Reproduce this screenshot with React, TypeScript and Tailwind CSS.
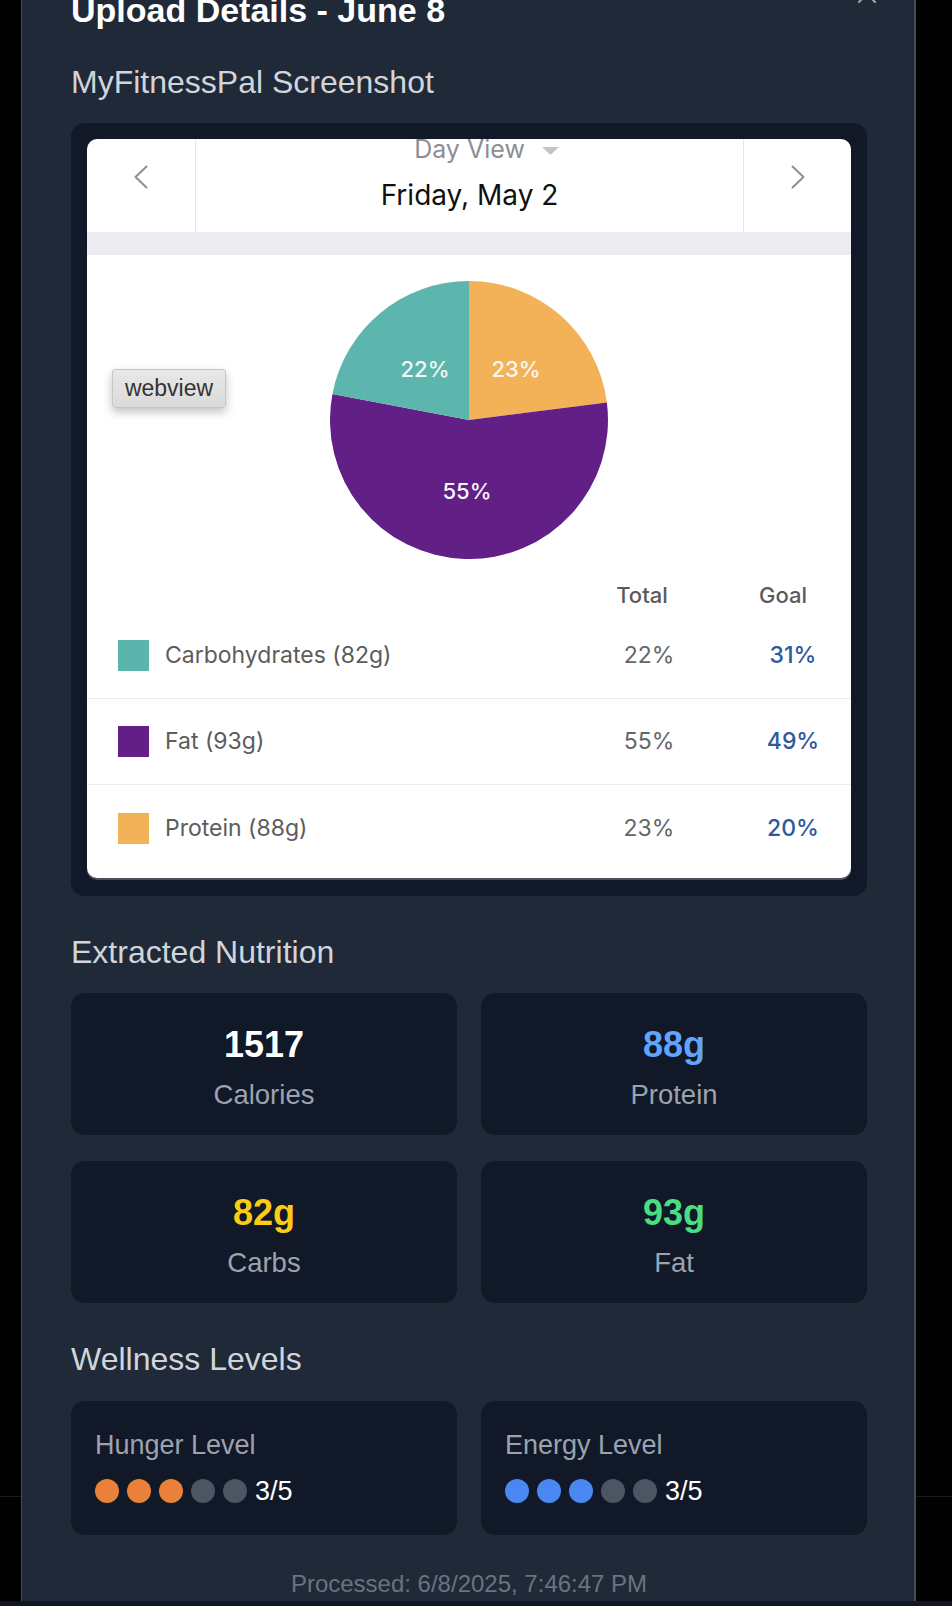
import { X } from "lucide-react";

interface Macro {
	name: string;
	color: string;
	total: string;
	goal: string;
}

const macros: Macro[] = [
	{ name: "Carbohydrates (82g)", color: "bg-[#5bb5ad]", total: "22%", goal: "31%" },
	{ name: "Fat (93g)", color: "bg-[#621f86]", total: "55%", goal: "49%" },
	{ name: "Protein (88g)", color: "bg-[#f2b257]", total: "23%", goal: "20%" },
];

const nutrition = [
	{ value: "1517", label: "Calories", tone: "text-white" },
	{ value: "88g", label: "Protein", tone: "text-[#60a5fa]" },
	{ value: "82g", label: "Carbs", tone: "text-[#facc15]" },
	{ value: "93g", label: "Fat", tone: "text-[#4ade80]" },
];

const Chevron = ({ flip }: { flip?: boolean }) => (
	<svg width="14" height="24" viewBox="0 0 14 24" className={flip ? "-scale-x-100" : ""}>
		<polyline points="12.5,1.5 1.5,12 12.5,22.5" fill="none" stroke="#8e8e93" strokeWidth="2" strokeLinecap="round" strokeLinejoin="round" />
	</svg>
);

const PieChart = () => (
	<svg width="278" height="278" viewBox="-139 -139 278 278">
		<path d="M0 0 L0 -139 A139 139 0 0 1 137.9 -17.42 Z" fill="#f3b257" />
		<path d="M0 0 L137.9 -17.42 A139 139 0 1 1 -136.54 -26.05 Z" fill="#621f86" />
		<path d="M0 0 L-136.54 -26.05 A139 139 0 0 1 0 -139 Z" fill="#5db6ae" />
		<g fill="#f7f7f7" fontFamily="Inter, sans-serif" fontSize="22" fontWeight="500" textAnchor="middle" dominantBaseline="central">
			<text x="-44" y="-51">22%</text>
			<text x="47" y="-51">23%</text>
			<text x="-2" y="71">55%</text>
		</g>
	</svg>
);

// the MyFitnessPal phone screenshot, redrawn
const FitnessScreenshot = () => (
	<div className="relative overflow-hidden rounded-[10px] bg-white font-['Inter',sans-serif] shadow-[0_2px_0_rgba(120,120,130,0.6)]">
		{/* day header */}
		<div className="flex h-[93px]">
			<div className="flex w-[109px] justify-center border-r border-[#e6e6ea] pt-[26px]">
				<Chevron />
			</div>
			<div className="flex flex-1 flex-col items-center">
				<div className="relative -mt-[5px] text-[25px] leading-[30px] text-[#8e8e93]">
					Day View
					<svg width="17" height="8" viewBox="0 0 17 8" className="absolute left-[calc(100%+17px)] top-[13px]">
						<polygon points="0,0 17,0 8.5,8" fill="#c4c4c8" />
					</svg>
				</div>
				<div className="mt-[14px] text-[28px] leading-[34px] text-[#111]">Friday, May 2</div>
			</div>
			<div className="flex w-[108px] justify-center border-l border-[#e6e6ea] pt-[26px]">
				<Chevron flip />
			</div>
		</div>
		<div className="h-[23px] bg-[#ebebf0]" />

		{/* chart */}
		<div className="mt-[26px] flex justify-center">
			<PieChart />
		</div>

		{/* legend table */}
		<div className="mt-[18px] flex h-[36px] items-center text-[22px] font-medium text-[#5a5a5a]">
			<div className="w-[505px]" />
			<div className="w-[100px] text-center">Total</div>
			<div className="ml-[41px] w-[100px] text-center">Goal</div>
		</div>
		<div className="pb-[7px]">
			{macros.map((m, i) => (
				<div
					key={m.name}
					className={`flex h-[86px] items-center text-[23px] ${i < macros.length - 1 ? "border-b border-[#ececec]" : ""}`}
				>
					<div className="flex w-[512px] items-center pl-[31px]">
						<div className={`h-[31px] w-[31px] ${m.color}`} />
						<span className="ml-[16px] text-[#5c5c5c]">{m.name}</span>
					</div>
					<div className="w-[100px] text-center text-[#666]">{m.total}</div>
					<div className="ml-[44px] w-[100px] text-center font-medium text-[#2d5a9e]">{m.goal}</div>
				</div>
			))}
		</div>

		{/* inspector tooltip over the screenshot */}
		<div className="absolute left-[25px] top-[230px] flex h-[39px] w-[114px] items-center justify-center rounded-[3px] border border-[#c6c6c6] bg-gradient-to-b from-[#e8e8e8] to-[#dadada] font-['Liberation_Sans',sans-serif] text-[23px] text-[#333] shadow-[0_4px_10px_rgba(0,0,0,0.25)]">
			webview
		</div>
	</div>
);

const LevelCard = ({ title, filled, color }: { title: string; filled: number; color: string }) => (
	<div className="h-[134px] rounded-[14px] bg-[#111827] px-6 pt-[26px]">
		<div className="text-[27px] leading-[36px] text-[#9ca3af]">{title}</div>
		<div className="mt-[12px] flex items-center gap-2">
			{[0, 1, 2, 3, 4].map(n => (
				<div key={n} className={`h-6 w-6 rounded-full ${n < filled ? color : "bg-[#4b5563]"}`} />
			))}
			<span className="text-[27px] leading-[32px] text-white">{filled}/5</span>
		</div>
	</div>
);

const App = () => {
	return (
		<div className="flex h-[1606px] w-[952px] flex-col overflow-hidden bg-black font-['Liberation_Sans',Arial,sans-serif]">
			<div className="relative flex min-h-0 flex-1">
				{/* page behind the overlay */}
				<div className="absolute left-0 right-0 top-[1496px] h-px bg-[#1b1b1b]" />

				<div className="relative ml-[21px] h-full w-[895px] overflow-hidden border-l border-r-2 border-[#454d5d] bg-[#1f2937] pl-[49px] pr-[47px]">
					<button className="absolute left-[829px] top-[-22px] text-[#9ca3af]">
						<X size={32} strokeWidth={1.6} />
					</button>

					<div className="-mt-[10px]">
						<h2 className="text-[34px] font-bold leading-[40px] text-white">Upload Details - June 8</h2>

						<h3 className="mt-[32px] text-[32px] leading-[40px] text-[#d1d5db]">MyFitnessPal Screenshot</h3>
						<div className="mt-[21px] rounded-[14px] bg-[#111827] px-4 pt-4 pb-[18px]">
							<FitnessScreenshot />
						</div>

						<h3 className="mt-[36px] text-[32px] leading-[40px] text-[#d1d5db]">Extracted Nutrition</h3>
						<div className="mt-[21px] grid grid-cols-2 gap-x-6 gap-y-[26px]">
							{nutrition.map(n => (
								<div key={n.label} className="h-[142px] rounded-[14px] bg-[#111827] pt-[32px] text-center">
									<div className={`text-[36px] font-bold leading-[40px] ${n.tone}`}>{n.value}</div>
									<div className="mt-[10px] text-[27.5px] leading-[39px] text-[#9ca3af]">{n.label}</div>
								</div>
							))}
						</div>

						<h3 className="mt-[36px] text-[32px] leading-[40px] text-[#d1d5db]">Wellness Levels</h3>
						<div className="mt-[22px] grid grid-cols-2 gap-6">
							<LevelCard title="Hunger Level" filled={3} color="bg-[#ea8039]" />
							<LevelCard title="Energy Level" filled={3} color="bg-[#4b87f0]" />
						</div>

						<div className="mt-[33px] text-center text-[24px] leading-[32px] text-[#6b7280]">
							Processed: 6/8/2025, 7:46:47 PM
						</div>
					</div>
				</div>
			</div>
			<div className="h-[5px] bg-[#111622]" />
		</div>
	);
};

export default App;
